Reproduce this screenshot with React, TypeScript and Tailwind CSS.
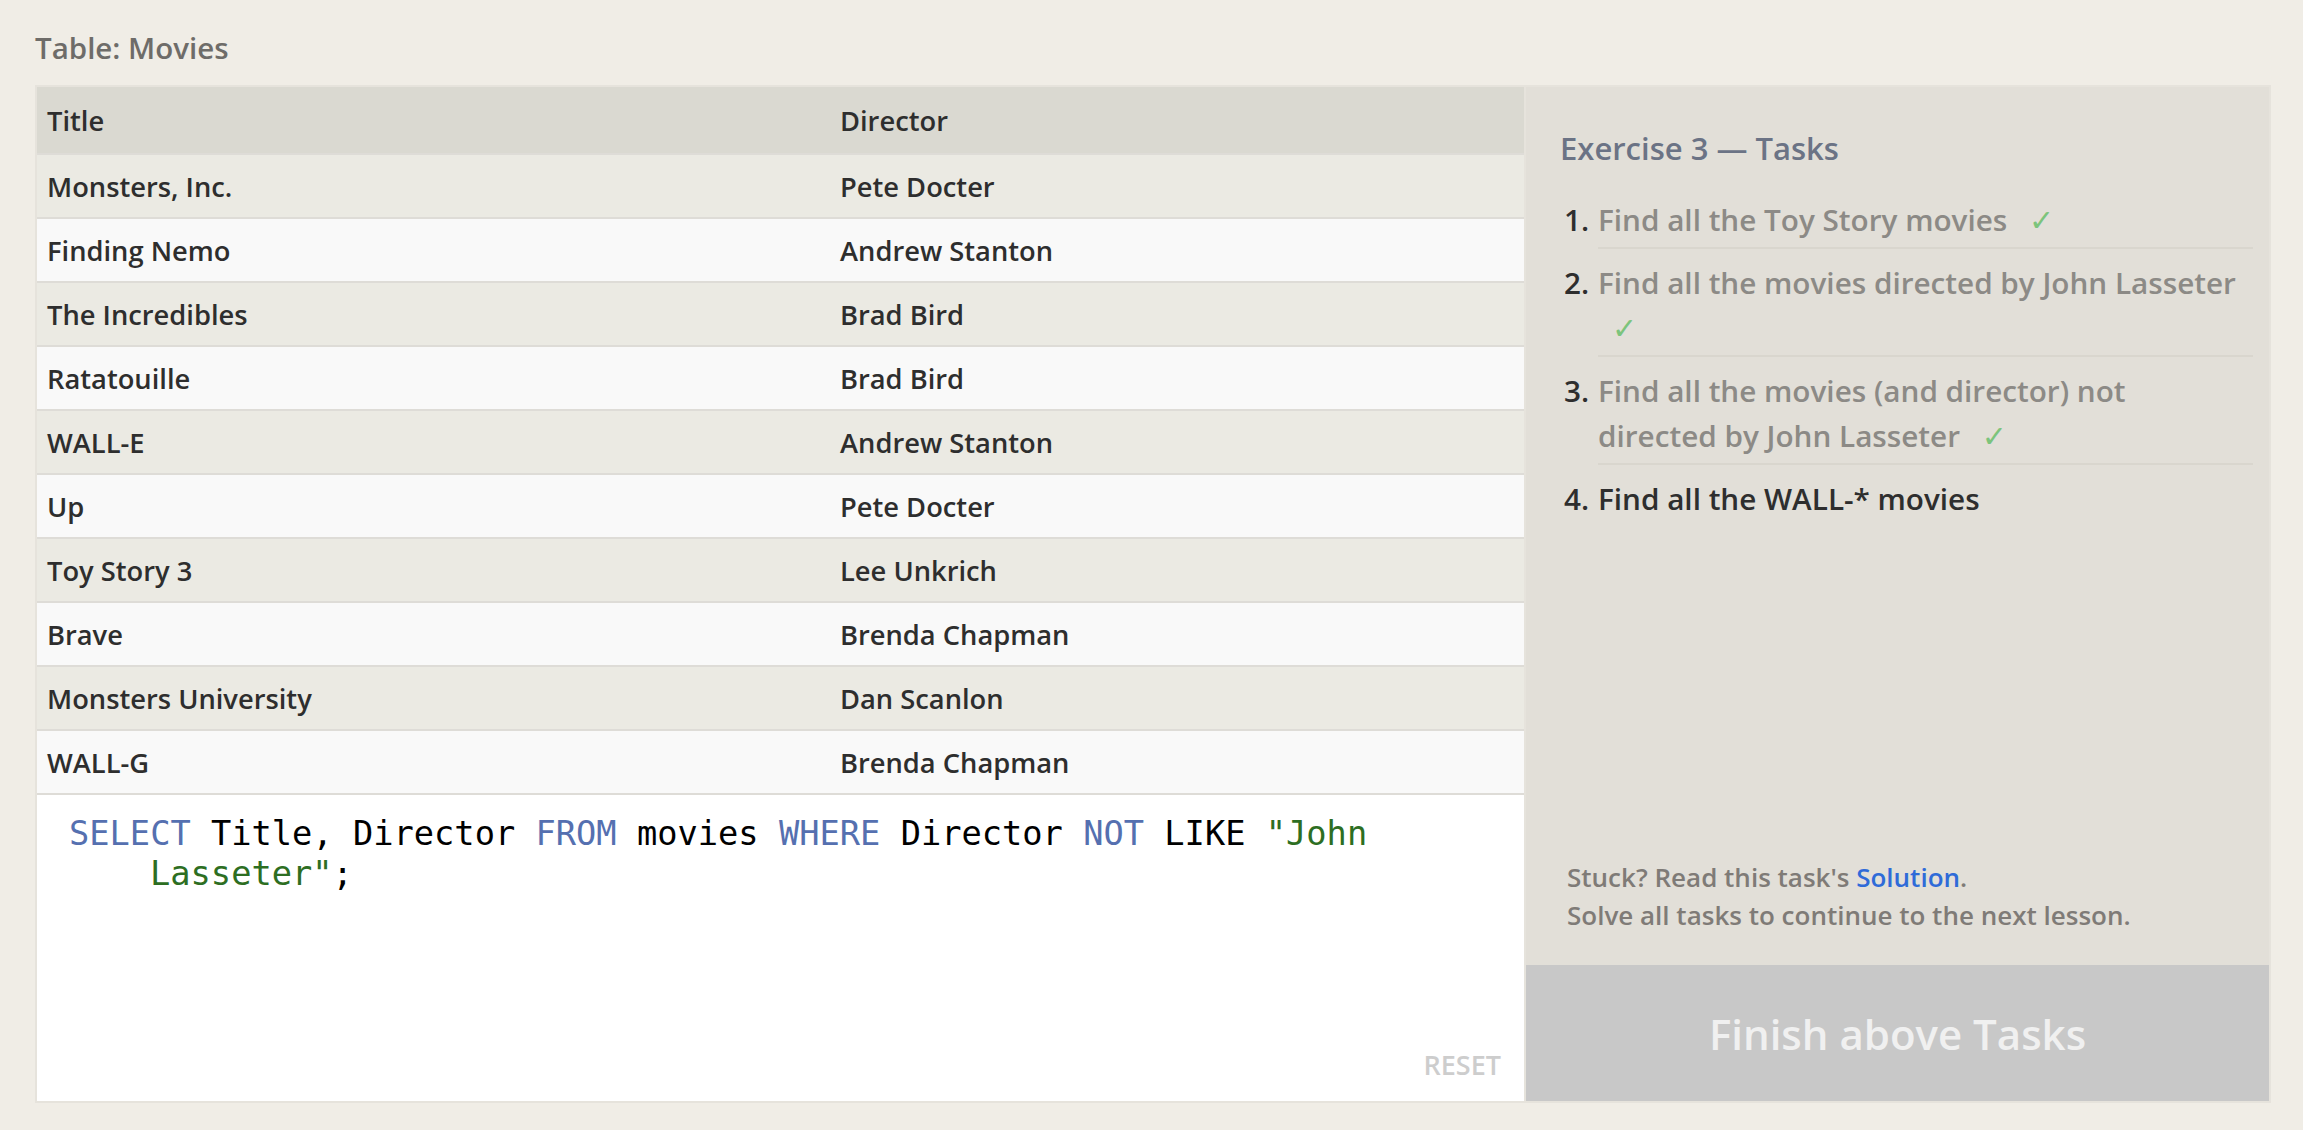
const movies = [
  ["Monsters, Inc.", "Pete Docter"],
  ["Finding Nemo", "Andrew Stanton"],
  ["The Incredibles", "Brad Bird"],
  ["Ratatouille", "Brad Bird"],
  ["WALL-E", "Andrew Stanton"],
  ["Up", "Pete Docter"],
  ["Toy Story 3", "Lee Unkrich"],
  ["Brave", "Brenda Chapman"],
  ["Monsters University", "Dan Scanlon"],
  ["WALL-G", "Brenda Chapman"],
];

const tasks = [
  { text: "Find all the Toy Story movies", done: true },
  { text: "Find all the movies directed by John Lasseter", done: true },
  { text: "Find all the movies (and director) not directed by John Lasseter", done: true },
  { text: "Find all the WALL-* movies", done: false },
];

function Check() {
  return (
    <span className="ml-[14px] text-[30px] leading-none text-[#7cc47c] font-normal" style={{ fontFamily: '"DejaVu Sans", sans-serif' }}>
      ✓
    </span>
  );
}

export default function App() {
  return (
    <div className="min-h-screen bg-[#f0ede6] pl-[35px] pr-[32px] pt-[28px] font-semibold" style={{ fontFamily: '"Open Sans", sans-serif' }}>
      <h2 className="text-[29.5px] leading-[40px] text-[#6e6c69] mb-[17px]">Table: Movies</h2>

      <div className="flex border-2 border-[#e6e3dc]">
        {/* left: table + editor */}
        <div className="w-[1489px] border-r-2 border-[#e6e3dc] flex flex-col">
          <div className="grid grid-cols-[791px_1fr] h-[68px] pt-[3px] bg-[#dad9d1] border-b-2 border-[#dedcd7] items-center text-[27.3px] text-[#2e2e2e]">
            <div className="pl-[10px]">Title</div>
            <div className="pl-[12px]">Director</div>
          </div>
          {movies.map(([title, director], i) => (
            <div
              key={title}
              className={
                "grid grid-cols-[791px_1fr] h-[64px] pt-[2px] border-b-2 border-[#dedcd7] items-center text-[27.3px] text-[#2e2e2e] " +
                (i % 2 === 0 ? "bg-[#ebeae3]" : "bg-[#f9f9f9]")
              }
            >
              <div className="pl-[10px]">{title}</div>
              <div className="pl-[12px]">{director}</div>
            </div>
          ))}

          <div className="bg-white h-[306px] flex flex-col pl-[32px] pr-[23px] pt-[19px] pb-[20px]">
            <div className="text-[33.7px] leading-[40px] font-normal text-black" style={{ fontFamily: '"DejaVu Sans Mono", monospace' }}>
              <div>
                <span className="text-[#5570b0]">SELECT</span> Title, Director <span className="text-[#5570b0]">FROM</span> movies{" "}
                <span className="text-[#5570b0]">WHERE</span> Director <span className="text-[#5570b0]">NOT</span> LIKE{" "}
                <span className="text-[#2d6e22]">"John</span>
              </div>
              <div className="pl-[81px]">
                <span className="text-[#2d6e22]">Lasseter"</span>;
              </div>
            </div>
            <div className="mt-auto self-end text-[27px] leading-[32px] text-[#cdcdcd]">RESET</div>
          </div>
        </div>

        {/* right: tasks */}
        <div className="flex-1 bg-[#e2dfd8] flex flex-col">
          <div className="flex-1 pt-[41px] pl-[34px] pr-[16px]">
            <h3 className="text-[31px] leading-[40px] text-[#6b7385]">Exercise 3 — Tasks</h3>
            <ol className="mt-[29px] text-[29.7px] leading-[45px]">
              {tasks.map((t, i) => (
                <li key={i} className={"flex " + (i > 0 ? "mt-[11px]" : "")}>
                  <span className="w-[38px] pl-[4px] text-[#2e2e2e] shrink-0">{i + 1}.</span>
                  <span
                    className={
                      "flex-1 pr-[10px] " +
                      (i < tasks.length - 1 ? "pb-[5px] border-b-2 border-[#d9d6ce] " : "") +
                      (t.done ? "text-[#8c8a86]" : "text-[#2e2e2e]")
                    }
                  >
                    {t.text}
                    {t.done && (
                      <>
                        {" "}
                        <Check />
                      </>
                    )}
                  </span>
                </li>
              ))}
            </ol>
          </div>

          <div className="pl-[41px] mb-[31px] text-[26px] leading-[38px] text-[#7f7b77]">
            <p>
              Stuck? Read this task's <a className="text-[#2f6bd8]">Solution</a>.
            </p>
            <p>Solve all tasks to continue to the next lesson.</p>
          </div>

          <div className="h-[136px] bg-[#c8c8c8] flex items-center justify-center text-[42px] text-[#f0f0f0]">
            Finish above Tasks
          </div>
        </div>
      </div>
    </div>
  );
}
